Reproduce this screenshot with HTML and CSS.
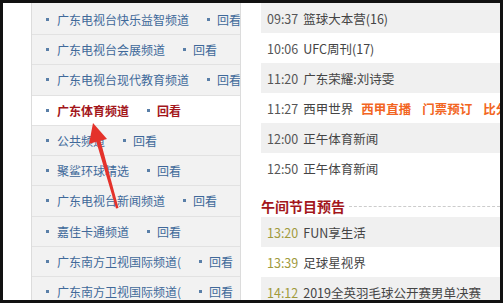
FILE: index.html
```html
<!DOCTYPE html>
<html lang="zh-CN">
<head>
<meta charset="utf-8">
<link rel="stylesheet" href="styles.css">
</head>
<body>
<div class="frame">
  <div class="gutter"></div>
  <ul class="channels">
    <li class="ch"><span class="dot"></span><a class="name">广东电视台快乐益智频道</a><span class="dot back-dot"></span><a class="back">回看</a></li>
    <li class="ch"><span class="dot"></span><a class="name">广东电视台会展频道</a><span class="dot back-dot"></span><a class="back">回看</a></li>
    <li class="ch"><span class="dot"></span><a class="name">广东电视台现代教育频道</a><span class="dot back-dot"></span><a class="back">回看</a></li>
    <li class="ch active"><span class="dot"></span><a class="name">广东体育频道</a><span class="dot back-dot"></span><a class="back">回看</a></li>
    <li class="ch"><span class="dot"></span><a class="name">公共频道</a><span class="dot back-dot"></span><a class="back">回看</a></li>
    <li class="ch"><span class="dot"></span><a class="name">聚鲨环球精选</a><span class="dot back-dot"></span><a class="back">回看</a></li>
    <li class="ch"><span class="dot"></span><a class="name">广东电视台新闻频道</a><span class="dot back-dot"></span><a class="back">回看</a></li>
    <li class="ch"><span class="dot"></span><a class="name">嘉佳卡通频道</a><span class="dot back-dot"></span><a class="back">回看</a></li>
    <li class="ch"><span class="dot"></span><a class="name">广东南方卫视国际频道(</a><span class="dot back-dot"></span><a class="back">回看</a></li>
    <li class="ch"><span class="dot"></span><a class="name">广东南方卫视国际频道(</a><span class="dot back-dot"></span><a class="back">回看</a></li>
  </ul>
  <div class="schedule">
    <ul class="progs">
      <li class="prog alt"><span class="time">09:37</span><span class="title">篮球大本营(16)</span></li>
      <li class="prog"><span class="time">10:06</span><span class="title">UFC周刊(17)</span></li>
      <li class="prog alt"><span class="time">11:20</span><span class="title">广东荣耀:刘诗雯</span></li>
      <li class="prog"><span class="time">11:27</span><span class="title">西甲世界</span><a class="tag">西甲直播</a><a class="tag">门票预订</a><a class="tag">比分直播</a></li>
      <li class="prog alt"><span class="time">12:00</span><span class="title">正午体育新闻</span></li>
      <li class="prog"><span class="time">12:50</span><span class="title">正午体育新闻</span></li>
    </ul>
    <div class="section-head"><h3 class="section-title">午间节目预告</h3><span class="dash"></span></div>
    <ul class="progs">
      <li class="prog alt"><span class="time later">13:20</span><span class="title">FUN享生活</span></li>
      <li class="prog"><span class="time later">13:39</span><span class="title">足球星视界</span></li>
      <li class="prog alt"><span class="time later">14:12</span><span class="title">2019全英羽毛球公开赛男单决赛</span></li>
    </ul>
  </div>
  <svg class="arrow" width="503" height="303" viewBox="0 0 503 303">
    <polygon points="93,123 107,139 100.5,140.8 118.5,208 116,208.6 96.3,141.8 89,144" fill="#e4322b"/>
  </svg>
</div>
</body>
</html>
```

FILE: styles.css
```css
* { box-sizing: border-box; }
html, body { margin: 0; padding: 0; background: #fff; }
body {
  font-family: "Noto Sans CJK SC", "Noto Sans", sans-serif;
  font-size: 12px;
}
.frame {
  position: relative;
  width: 503px;
  height: 303px;
  border: 3px solid #111;
  display: flex;
  overflow: hidden;
  background: #fff;
}
.gutter { width: 28px; flex: none; }
.channels {
  list-style: none;
  margin: 0;
  padding: 1.75px 0 0;
  width: 210px;
  flex: none;
  background: #f2f2f2;
  border-left: 1px solid #dcdcdc;
  border-right: 1px solid #dcdcdc;
  overflow: hidden;
}
.ch {
  height: 30.25px;
  display: flex;
  align-items: center;
  padding-left: 14px;
  border-bottom: 1px solid #e2e2e2;
  white-space: nowrap;
  color: #40699a;
}
.ch.active { background: #fff; }
.dot {
  width: 3px;
  height: 3px;
  background: #5a7fa8;
  flex: none;
}
.name { margin-left: 8px; color: #40699a; }
.back-dot { margin-left: 18px; }
.back { margin-left: 7px; color: #40699a; }
.active .name, .active .back { color: #a3161b; font-weight: bold; }
.schedule {
  margin-left: 20px;
  flex: 1;
  min-width: 0;
  overflow: hidden;
}
.progs { list-style: none; margin: 0; padding: 0; }
.prog {
  height: 30px;
  display: flex;
  align-items: center;
  padding-left: 6px;
  white-space: nowrap;
  color: #444;
  font-size: 12.5px;
}
.prog.alt { background: #f0f0f0; }
.time { color: #555; margin-right: 5px; }
.time.later { color: #a09a3c; }
.title { color: #444; }
.tag { color: #f26522; font-weight: bold; margin-left: 8px; }
.tag + .tag { margin-left: 11px; }
.section-head {
  height: 34px;
  display: flex;
  align-items: center;
  padding-top: 12px;
}
.section-title {
  margin: 0;
  font-size: 14px;
  font-weight: bold;
  color: #a3161b;
  white-space: nowrap;
}
.dash {
  flex: 1;
  margin-left: 4px;
  border-top: 1px dashed #ccc;
}
.arrow { position: absolute; left: -3px; top: -3px; pointer-events: none; }
```
